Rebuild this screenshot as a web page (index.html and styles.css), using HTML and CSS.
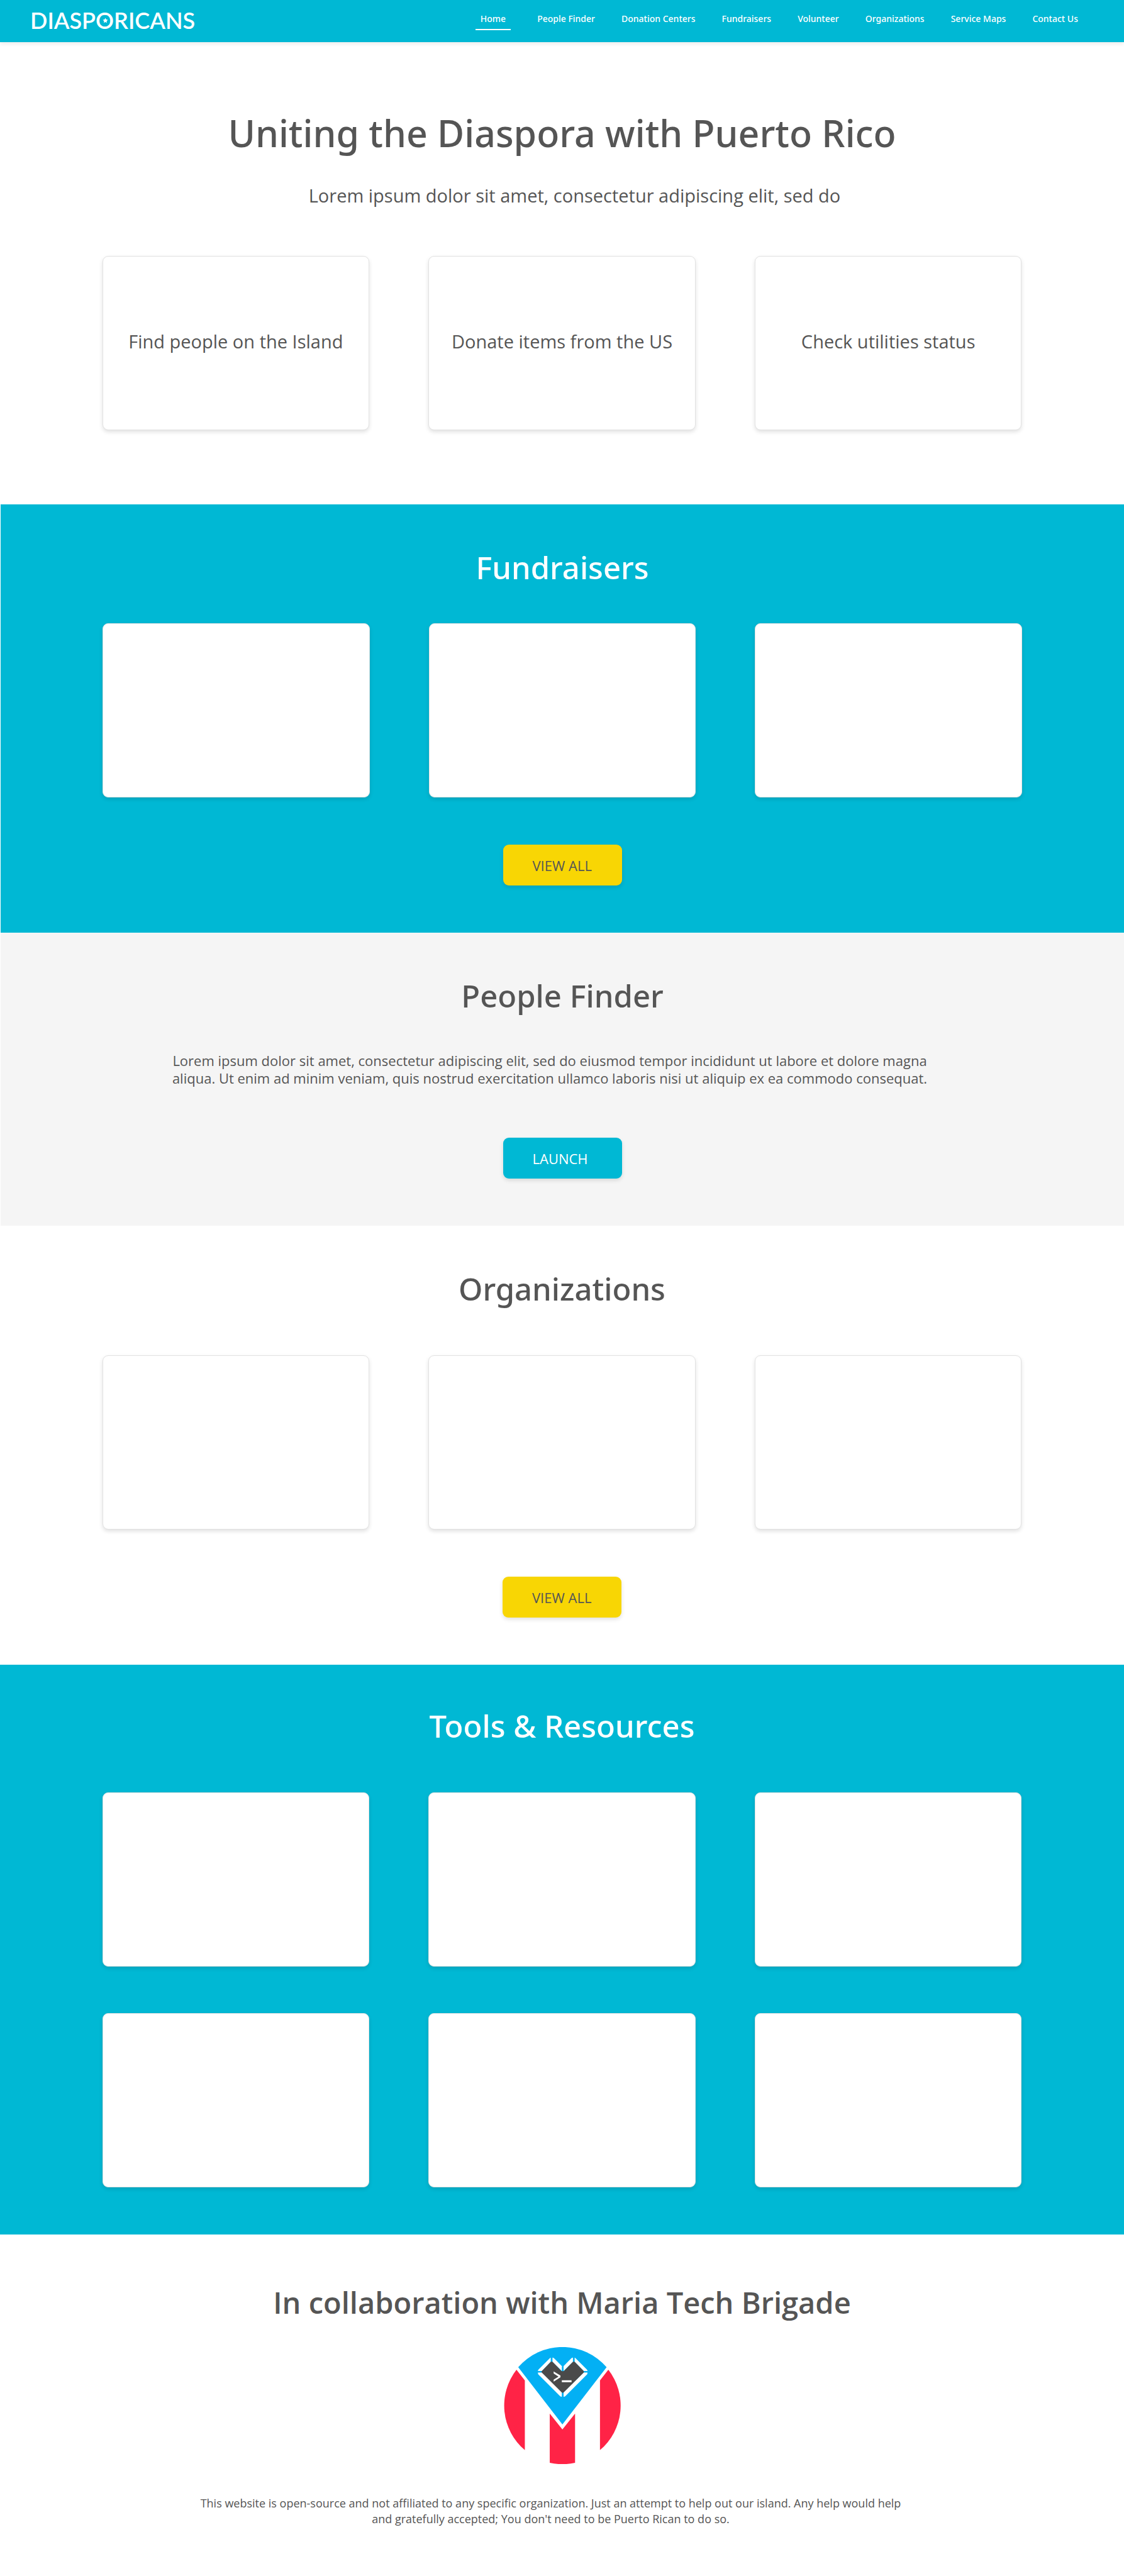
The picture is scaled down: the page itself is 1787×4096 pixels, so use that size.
FILE: index.html
```html
<!DOCTYPE html>
<html lang="en">
<head>
<meta charset="utf-8">
<meta name="viewport" content="width=device-width, initial-scale=1">
<title>Diasporicans</title>
<link rel="stylesheet" href="styles.css">
</head>
<body>
<header class="site-header">
  <a class="logo" href="#">DIASP<span class="logo-o">O<svg class="logo-star" viewBox="0 0 20 20" aria-hidden="true"><path d="M10 1l2.8 5.8 6.2.9-4.500 4.400 1.100 6.300L10 15.400 4.400 18.400l1.100-6.300L1 7.700l6.200-.9z"/></svg></span>RICANS</a>
  <nav class="nav" aria-label="Main">
    <a class="nav-link nav-link-active" href="#" aria-current="page">Home</a>
    <a class="nav-link" href="#people-finder">People Finder</a>
    <a class="nav-link" href="#">Donation Centers</a>
    <a class="nav-link" href="#fundraisers">Fundraisers</a>
    <a class="nav-link" href="#">Volunteer</a>
    <a class="nav-link" href="#organizations">Organizations</a>
    <a class="nav-link" href="#">Service Maps</a>
    <a class="nav-link" href="#">Contact Us</a>
  </nav>
</header>

<main>
  <section class="hero">
    <h1 class="hero-title">Uniting the Diaspora with Puerto Rico</h1>
    <p class="hero-text">Lorem ipsum dolor sit amet, consectetur adipiscing elit, sed do</p>
    <div class="cards">
      <a class="card" href="#">Find people on the Island</a>
      <a class="card" href="#">Donate items from the US</a>
      <a class="card" href="#">Check utilities status</a>
    </div>
  </section>

  <section class="section section-cyan section-edged" id="fundraisers">
    <h2 class="title title-near">Fundraisers</h2>
    <div class="cards">
      <article class="card"></article>
      <article class="card"></article>
      <article class="card"></article>
    </div>
    <button class="button button-yellow" type="button">VIEW ALL</button>
  </section>

  <section class="section section-grey section-edged" id="people-finder">
    <h2 class="title title-near">People Finder</h2>
    <p class="section-text">Lorem ipsum dolor sit amet, consectetur adipiscing elit, sed do eiusmod tempor incididunt ut labore et dolore magna aliqua. Ut enim ad minim veniam, quis nostrud exercitation ullamco laboris nisi ut aliquip ex ea commodo consequat.</p>
    <button class="button button-cyan" type="button">LAUNCH</button>
  </section>

  <section class="section" id="organizations">
    <h2 class="title">Organizations</h2>
    <div class="cards">
      <article class="card"></article>
      <article class="card"></article>
      <article class="card"></article>
    </div>
    <button class="button button-yellow" type="button">VIEW ALL</button>
  </section>

  <section class="section section-cyan section-tools">
    <h2 class="title">Tools &amp; Resources</h2>
    <div class="cards">
      <article class="card"></article>
      <article class="card"></article>
      <article class="card"></article>
      <article class="card"></article>
      <article class="card"></article>
      <article class="card"></article>
    </div>
  </section>
</main>

<footer class="footer">
  <h2 class="footer-title">In collaboration with Maria Tech Brigade</h2>
  <svg class="brigade" viewBox="62 87 601 600" role="img" aria-label="Maria Tech Brigade">
    <path fill="#03b0f4" d="M136 190L363 484 590 190A300 300 0 0 0 136 190z"/>
    <g fill="#ff2346">
      <path d="M127 203L170 258V616A300 300 0 0 1 127 203z"/>
      <path d="M599 203L556 258V616A300 300 0 0 0 599 203z"/>
      <path d="M298 428L363 510 428 428V681A300 300 0 0 1 298 681z"/>
    </g>
    <path fill="#4a4a4a" d="M303 162h10l46 48h11l46-48h10l47 48v7L369 321h-10L256 217v-7z"/>
    <g fill="#fff">
      <path d="M237 209q0-4 4-8l54-54q4-4 8-6v21l-46 47z"/>
      <path d="M312 141q4 0 8 3l40 40v25l-48-47z"/>
      <path d="M417 141q-4 0-8 3l-40 40v25l48-47z"/>
      <path d="M492 209q0-4-4-8l-54-54q-4-4-8-6v21l47 47z"/>
      <path d="M237 217h20l103 103v22q-6 0-10-4L241 229q-4-5-4-12z"/>
      <path d="M492 217h-19L369 320v22q6 0 10-4L488 229q4-5 4-12z"/>
      <path d="M318 212l35 21v9l-35 22v-10l25-16-25-16z"/>
      <path d="M360 257h50v10h-50z"/>
    </g>
  </svg>
  <p class="footer-text">This website is open-source and not affiliated to any specific organization. Just an attempt to help out our island. Any help would help and gratefully accepted; You don't need to be Puerto Rican to do so.</p>
</footer>
</body>
</html>
```
FILE: styles.css
```css
:root {
  --cyan: #00b8d4;
  --yellow: #f8d604;
  --ink: #555;
  --shadow: 0 3px 6px rgba(0, 0, 0, .12);
  --display: "Noto Sans", "Open Sans", sans-serif;
  --body: "Open Sans", "Noto Sans", sans-serif;
}

* {
  box-sizing: border-box;
}

body {
  margin: 0;
  background: #fff;
  color: var(--ink);
  font-family: var(--body);
}

h1, h2, p {
  margin: 0;
}

a {
  color: inherit;
  text-decoration: none;
}

/* Header */
.site-header {
  display: flex;
  align-items: center;
  justify-content: space-between;
  height: 67px;
  padding: 0 73px 0 48px;
  background: var(--cyan);
  color: #fff;
  box-shadow: 0 3px 6px rgba(0, 0, 0, .08);
}

.logo {
  padding-bottom: 3px;
  font: 600 36px/44px Lato, sans-serif;
}

.logo-o {
  position: relative;
}

.logo-star {
  position: absolute;
  top: 50%;
  left: 50%;
  width: 9px;
  height: 9px;
  margin: -4px 0 0 -4px;
  fill: #fff;
}

.nav {
  display: flex;
  gap: 42px;
}

.nav-link {
  padding-bottom: 6px;
  border-bottom: 2px solid transparent;
  font-family: var(--display);
  font-size: 14px;
  font-weight: 500;
  line-height: 20px;
}

.nav-link-active {
  padding-right: 8px;
  padding-left: 8px;
  border-color: #fff;
}

/* Hero */
.hero {
  padding: 104px 24px 118px;
  text-align: center;
}

.hero-title {
  margin-bottom: 40px;
  font-family: var(--display);
  font-size: 59px;
  font-weight: 500;
  line-height: 80px;
}

.hero-text {
  margin-bottom: 76px;
  padding-left: 40px;
  font-size: 29px;
  line-height: 40px;
}

/* Cards */
.cards {
  display: grid;
  grid-template-columns: repeat(3, 1fr);
  gap: 74px 94px;
  max-width: 1462px;
  margin: 0 auto;
}

.card {
  display: flex;
  align-items: center;
  justify-content: center;
  min-height: 277px;
  padding-bottom: 5px;
  border: 1px solid #e2e2e2;
  border-radius: 9px;
  background: #fff;
  box-shadow: var(--shadow);
  font-size: 29px;
  line-height: 40px;
}

/* Sections */
.section {
  padding: 67px 24px 75px;
  text-align: center;
}

.section-cyan {
  background: var(--cyan);
  color: #fff;
}

.section-grey {
  background: #f5f5f5;
}

.section-edged {
  border-left: 1px solid #fff;
}

.section-tools {
  padding-top: 64px;
}

.title {
  margin-bottom: 73px;
  font-family: var(--display);
  font-size: 49px;
  font-weight: 500;
  line-height: 66px;
}

.title-near {
  margin-bottom: 56px;
}

.section-text {
  max-width: 1260px;
  margin: 0 auto 81px;
  padding-right: 40px;
  font-size: 22px;
  line-height: 28px;
}

.button {
  display: block;
  width: 189px;
  height: 65px;
  margin: 0 auto;
  padding: 0 0 0 47px;
  border: 0;
  border-radius: 9px;
  box-shadow: var(--shadow);
  font: 400 22px/28px var(--body);
  text-align: left;
}

.cards + .button {
  margin-top: 75px;
}

.button-yellow {
  background: var(--yellow);
  color: var(--ink);
}

.button-cyan {
  background: var(--cyan);
  color: #fff;
}

/* Footer */
.footer {
  padding: 75px 24px 78px;
  text-align: center;
}

.footer-title {
  margin-bottom: 38px;
  font-size: 47px;
  font-weight: 600;
  line-height: 66px;
}

.brigade {
  display: block;
  width: 186px;
  height: 186px;
  margin: 0 auto 50px;
}

.footer-text {
  max-width: 1176px;
  margin: 0 auto;
  padding-right: 36px;
  font-size: 18px;
  line-height: 25px;
}
```
